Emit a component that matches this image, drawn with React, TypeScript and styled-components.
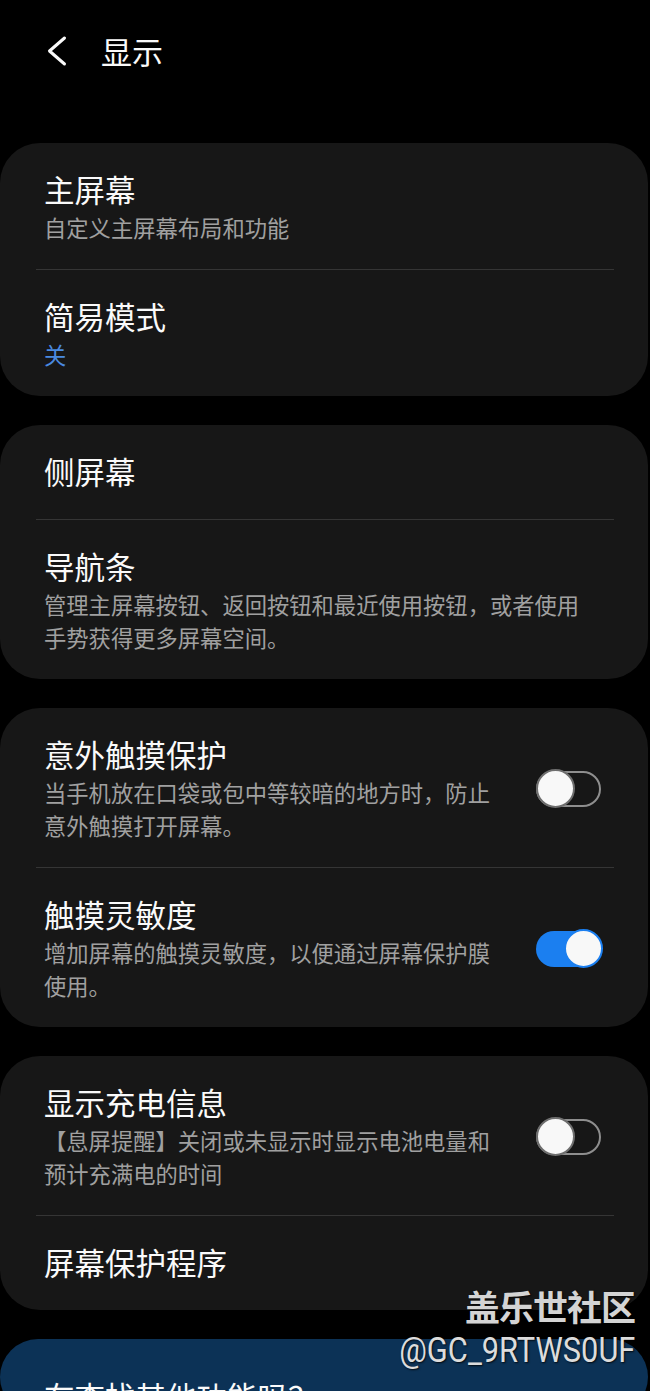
import React from "react";
import styled, { createGlobalStyle } from "styled-components";

const GlobalStyle = createGlobalStyle`
  html, body {
    margin: 0;
    padding: 0;
    background: #000;
    height: 1391px;
    overflow: hidden;
  }
  body {
    font-family: "Noto Sans CJK SC", "Noto Sans", sans-serif;
    -webkit-font-smoothing: antialiased;
  }
  * { box-sizing: border-box; }
`;

const Page = styled.div`
  position: relative;
  width: 650px;
  height: 1391px;
  overflow: hidden;
  background: #000;
`;

const Header = styled.header`
  height: 102px;
  display: flex;
  align-items: center;
  padding-left: 46px;
  gap: 33px;
`;

const BackButton = styled.button`
  display: flex;
  align-items: center;
  justify-content: center;
  width: 22px;
  height: 32px;
  padding: 0;
  border: none;
  background: transparent;
  color: #fafafa;
`;

const Title = styled.h1`
  margin: 0;
  font-size: 31px;
  line-height: 40px;
  font-weight: 400;
  color: #fafafa;
`;

const List = styled.main`
  display: flex;
  flex-direction: column;
  gap: 29px;
  padding-top: 41px;
`;

const Card = styled.section<{ $tone?: "dark" | "blue" }>`
  width: 648px;
  border-radius: 40px;
  background: ${(p) => (p.$tone === "blue" ? "#0c3256" : "#171717")};
  padding: 0 34px 0 36px;
`;

const Divider = styled.div`
  height: 1px;
  background: #353535;
`;

const Row = styled.div<{ $single?: boolean }>`
  display: flex;
  align-items: center;
  gap: 44px;
  padding: 27px 13px ${(p) => (p.$single ? 29 : 25)}px 8px;
`;

const RowText = styled.div`
  flex: 1;
  min-width: 0;
  display: flex;
  flex-direction: column;
`;

const RowTitle = styled.div`
  font-size: 30.5px;
  line-height: 38px;
  color: #fafafa;
`;

const RowSub = styled.div<{ $accent?: boolean }>`
  margin-top: 3px;
  max-width: 545px;
  font-size: 22.3px;
  line-height: 33px;
  color: ${(p) => (p.$accent ? "#4a8ae0" : "#a0a0a0")};
`;

const SwitchTrack = styled.div<{ $on: boolean }>`
  position: relative;
  flex: none;
  width: 65px;
  height: 36px;
  border-radius: 18px;
  background: ${(p) => (p.$on ? "#1b7ff0" : "transparent")};
  border: ${(p) => (p.$on ? "none" : "2px solid #8e8e8e")};
`;

const SwitchThumb = styled.div<{ $on: boolean }>`
  position: absolute;
  top: 50%;
  ${(p) => (p.$on ? "right: -2px;" : "left: -2px;")}
  width: 39px;
  height: 39px;
  margin-top: -19.5px;
  border-radius: 50%;
  background: #f8f8f8;
  border: 2px solid ${(p) => (p.$on ? "#1b7ff0" : "#6e6e6e")};
`;

const PromoTitle = styled.div`
  padding: 38px 8px 0 8px;
  font-size: 30.5px;
  line-height: 38px;
  color: #fafafa;
`;

const Watermark = styled.div`
  position: absolute;
  right: 15px;
  top: 1282px;
  display: flex;
  flex-direction: column;
  align-items: flex-end;
  pointer-events: none;
`;

const WatermarkBrand = styled.div`
  font-family: "Noto Sans CJK SC", sans-serif;
  font-weight: 700;
  font-size: 35px;
  line-height: 48px;
  color: #d4d4d4;
  text-shadow: 1px 1px 2px rgba(0, 0, 0, 0.8);
  letter-spacing: -1px;
`;

const WatermarkUser = styled.div`
  font-family: "Roboto", "Noto Sans", sans-serif;
  font-size: 35px;
  line-height: 42px;
  color: #dcdcdc;
  text-shadow: 1px 1px 2px rgba(0, 0, 0, 0.8);
  transform: scaleX(0.88);
  transform-origin: right center;
`;

function Switch({ on }: { on: boolean }) {
  return (
    <SwitchTrack $on={on}>
      <SwitchThumb $on={on} />
    </SwitchTrack>
  );
}

type Item = {
  title: string;
  sub?: string;
  accent?: boolean;
  toggle?: boolean;
};

const groups: Item[][] = [
  [
    { title: "主屏幕", sub: "自定义主屏幕布局和功能" },
    { title: "简易模式", sub: "关", accent: true },
  ],
  [
    { title: "侧屏幕" },
    {
      title: "导航条",
      sub: "管理主屏幕按钮、返回按钮和最近使用按钮，或者使用手势获得更多屏幕空间。",
    },
  ],
  [
    {
      title: "意外触摸保护",
      sub: "当手机放在口袋或包中等较暗的地方时，防止意外触摸打开屏幕。",
      toggle: false,
    },
    {
      title: "触摸灵敏度",
      sub: "增加屏幕的触摸灵敏度，以便通过屏幕保护膜使用。",
      toggle: true,
    },
  ],
  [
    {
      title: "显示充电信息",
      sub: "【息屏提醒】关闭或未显示时显示电池电量和预计充满电的时间",
      toggle: false,
    },
    { title: "屏幕保护程序" },
  ],
];

export default function App() {
  return (
    <Page>
      <GlobalStyle />
      <Header>
        <BackButton aria-label="返回">
          <svg width="22" height="32" viewBox="0 0 22 32" fill="none">
            <polyline
              points="18.5,3 3.5,16 18.5,29"
              stroke="#fafafa"
              strokeWidth="3"
              strokeLinecap="round"
              strokeLinejoin="round"
            />
          </svg>
        </BackButton>
        <Title>显示</Title>
      </Header>
      <List>
        {groups.map((items, gi) => (
          <Card key={gi}>
            {items.map((it, i) => (
              <React.Fragment key={it.title}>
                {i > 0 && <Divider />}
                <Row $single={!it.sub}>
                  <RowText>
                    <RowTitle>{it.title}</RowTitle>
                    {it.sub && <RowSub $accent={it.accent}>{it.sub}</RowSub>}
                  </RowText>
                  {it.toggle !== undefined && <Switch on={it.toggle} />}
                </Row>
              </React.Fragment>
            ))}
          </Card>
        ))}
        <Card $tone="blue">
          <PromoTitle>在查找其他功能吗？</PromoTitle>
        </Card>
      </List>
      <Watermark>
        <WatermarkBrand>盖乐世社区</WatermarkBrand>
        <WatermarkUser>@GC_9RTWS0UF</WatermarkUser>
      </Watermark>
    </Page>
  );
}
